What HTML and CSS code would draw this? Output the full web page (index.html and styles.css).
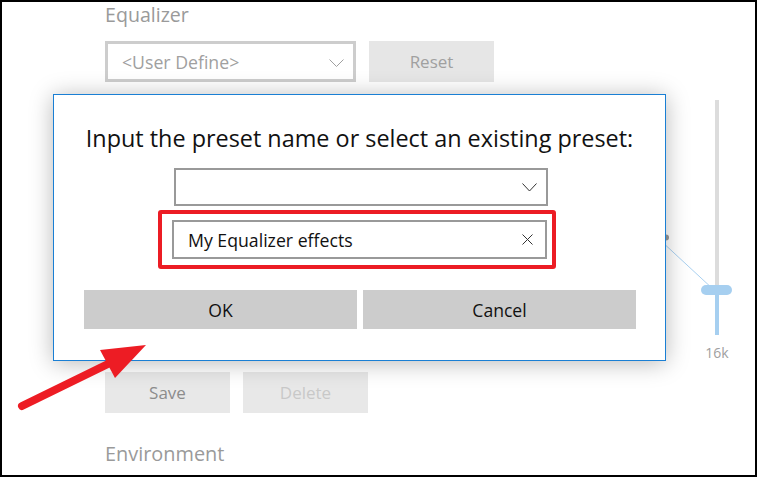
FILE: index.html
```html
<!DOCTYPE html>
<html>
<head>
<meta charset="utf-8">
<link rel="stylesheet" href="styles.css">
</head>
<body>
<div class="frame">
  <div class="app">
    <div class="section-title">Equalizer</div>
    <div class="row">
      <div class="bg-select">
        <span>&lt;User Define&gt;</span>
        <svg class="chev" width="15" height="8" viewBox="0 0 15 8"><path d="M0.5 0.5 L7.5 7.5 L14.5 0.5" fill="none" stroke="#a0a0a0" stroke-width="1"/></svg>
      </div>
      <div class="bg-btn">Reset</div>
    </div>
    <div class="chart">
      <svg width="649" height="290" viewBox="0 0 649 290">
        <line x1="555" y1="158" x2="609" y2="208" stroke="#a9d0f0" stroke-width="1"/>
        <circle cx="561" cy="155.5" r="3" fill="#9a9a9a"/>
        <rect x="610" y="18" width="4" height="186" fill="#dcdcdc"/>
        <rect x="610" y="208" width="4" height="45" fill="#a6cff0"/>
        <rect x="596" y="203" width="31" height="10" rx="5" fill="#a6cff0"/>
        <text x="612" y="276" text-anchor="middle" class="axis-label">16k</text>
      </svg>
    </div>
    <div class="row">
      <div class="bg-btn save">Save</div>
      <div class="bg-btn disabled">Delete</div>
    </div>
    <div class="section-title env">Environment</div>
  </div>

  <div class="dialog">
    <div class="dlg-title">Input the preset name or select an existing preset:</div>
    <div class="dlg-select">
      <svg width="15" height="9" viewBox="0 0 15 9"><path d="M0.5 0.5 L7.5 8 L14.5 0.5" fill="none" stroke="#333" stroke-width="1"/></svg>
    </div>
    <div class="highlight">
      <div class="dlg-input">
        <span>My Equalizer effects</span>
        <svg width="11" height="11" viewBox="0 0 11 11"><path d="M0.5 0.5 L10.5 10.5 M10.5 0.5 L0.5 10.5" fill="none" stroke="#333" stroke-width="1"/></svg>
      </div>
    </div>
    <div class="dlg-buttons">
      <div class="dlg-btn">OK</div>
      <div class="dlg-btn">Cancel</div>
    </div>
  </div>

  <svg class="arrow" width="160" height="80" viewBox="0 0 160 80">
    <line x1="22" y1="66" x2="112" y2="22" stroke="#ed1c24" stroke-width="8" stroke-linecap="round"/>
    <polygon points="146,5 100,10 115,38" fill="#ed1c24"/>
  </svg>
</div>
</body>
</html>
```

FILE: styles.css
```css
* { box-sizing: border-box; }
html, body { margin: 0; padding: 0; background: #fff; }
body { font-family: "Open Sans", "Noto Sans", sans-serif; }

.frame {
  position: relative;
  width: 757px;
  height: 477px;
  border: 2px solid #000;
  overflow: hidden;
  background: #fff;
}

.app {
  display: flex;
  flex-direction: column;
  padding: 1px 0 0 103px;
}

.section-title {
  font-size: 19.6px;
  line-height: 24px;
  color: #9a9a9a;
}
.section-title.env { margin-top: 29px; font-size: 19.9px; }

.row {
  display: flex;
  gap: 13px;
}
.row:nth-of-type(2) { margin-top: 14px; }

.bg-select {
  width: 251px;
  height: 41px;
  border: 3px solid #cdcdcd;
  display: flex;
  align-items: center;
  justify-content: space-between;
  padding: 0 9px 0 14px;
  font-size: 17.7px;
  color: #a0a0a0;
}
.bg-select .chev { margin-top: 2px; }

.bg-btn {
  width: 125px;
  height: 41px;
  background: #e6e6e6;
  display: flex;
  align-items: center;
  justify-content: center;
  font-size: 17px;
  color: #a0a0a0;
}
.bg-btn.save { color: #8c8c8c; background: #e8e8e8; }
.bg-btn.disabled { color: #c8c8c8; background: #e8e8e8; }

.chart {
  height: 290px;
}
.chart svg { display: block; }
.axis-label {
  font-family: "Open Sans", sans-serif;
  font-size: 14px;
  fill: #a0a0a0;
}

.dialog {
  position: absolute;
  left: 51px;
  top: 92px;
  width: 613px;
  height: 267px;
  background: #fff;
  border: 1px solid #1a7fd4;
  box-shadow: 0 2px 22px rgba(0, 0, 0, 0.28);
  display: flex;
  flex-direction: column;
  align-items: flex-start;
  padding-top: 28px;
}

.dlg-title {
  align-self: stretch;
  text-align: center;
  font-size: 23.4px;
  line-height: 30px;
  color: #111;
  white-space: nowrap;
}

.dlg-select {
  margin: 15px 0 0 120px;
  width: 374px;
  height: 38px;
  border: 2px solid #999;
  display: flex;
  align-items: center;
  justify-content: flex-end;
  padding-right: 9px;
}

.highlight {
  margin: 4px 0 0 104px;
  border: 4px solid #ec1c24;
  border-radius: 3px;
  padding: 6px 5px 6px 10px;
}

.dlg-input {
  width: 375px;
  height: 39px;
  border: 2px solid #999;
  display: flex;
  align-items: center;
  justify-content: space-between;
  padding: 0 12px 0 14px;
  font-size: 17.7px;
  color: #111;
}

.dlg-buttons {
  margin: 21px 0 0 30px;
  display: flex;
  gap: 6px;
}

.dlg-btn {
  width: 273px;
  height: 39px;
  background: #cccccc;
  display: flex;
  align-items: center;
  justify-content: center;
  font-size: 17.6px;
  color: #111;
}

.arrow {
  position: absolute;
  left: -2px;
  top: 338px;
}
```
